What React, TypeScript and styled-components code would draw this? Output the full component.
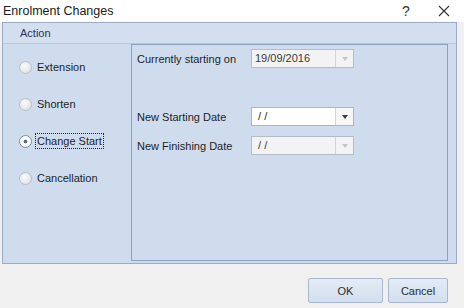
import React from 'react';
import styled, { createGlobalStyle } from 'styled-components';

const GlobalStyle = createGlobalStyle`
  html, body {
    margin: 0;
    padding: 0;
    background: #f0f0f0;
  }
  body {
    font-family: "Liberation Sans", Arial, sans-serif;
    font-size: 11px;
    color: #1e1e1e;
  }
`;

const Dialog = styled.div`
  width: 464px;
  height: 308px;
  display: flex;
  flex-direction: column;
  background: #f0f0f0;
  overflow: hidden;
`;

const TitleBar = styled.div`
  height: 22px;
  background: #ffffff;
  display: flex;
  align-items: center;
  padding-left: 3px;
  font-size: 12.5px;
  color: #202020;
`;

const Title = styled.div`
  flex: 1;
  margin-top: -1px;
`;

const TitleButton = styled.div<{ $w: number }>`
  width: ${(p) => p.$w}px;
  display: flex;
  justify-content: center;
  align-items: center;
  font-size: 14px;
  color: #333;
`;

const Group = styled.div`
  margin-left: 2px;
  width: 453px;
  height: 240px;
  border: 1px solid #9aabc7;
  background: #cfdcee;
  display: flex;
  flex-direction: column;
`;

const GroupHeader = styled.div`
  height: 20px;
  border-bottom: 1px solid #b8c7dd;
  background: #d3dfef;
  display: flex;
  align-items: center;
  padding-left: 17px;
  color: #25365a;
`;

const GroupBody = styled.div`
  flex: 1;
  display: flex;
  padding: 0 8px 2px 0;
`;

const RadioList = styled.div`
  width: 128px;
  display: flex;
  flex-direction: column;
  gap: 17px;
  padding: 13px 0 0 15px;
  box-sizing: border-box;
`;

const RadioRow = styled.div`
  height: 20px;
  display: flex;
  align-items: center;
  gap: 3px;
`;

const RadioDot = styled.span<{ $checked?: boolean }>`
  width: 13px;
  height: 13px;
  border-radius: 50%;
  box-sizing: border-box;
  border: 1px solid ${(p) => (p.$checked ? '#7d8fae' : '#b9bcc2')};
  background: ${(p) =>
    p.$checked
      ? 'radial-gradient(circle, #5a6c8c 0 1.5px, #ffffff 2.2px)'
      : 'radial-gradient(circle at 40% 35%, #fafafa, #dcdde0)'};
  margin-left: 1px;
`;

const RadioLabel = styled.span<{ $focused?: boolean }>`
  padding: 1px 1px;
  border: 1px dotted ${(p) => (p.$focused ? '#222' : 'transparent')};
`;

const Panel = styled.div`
  flex: 1;
  border: 1px solid #8ea0bd;
  background: #cfdcee;
  padding: 4px 0 0 5px;
  display: flex;
  flex-direction: column;
`;

const Field = styled.div<{ $top: number }>`
  display: flex;
  align-items: center;
  margin-top: ${(p) => p.$top}px;
`;

const FieldLabel = styled.div`
  width: 114px;
  white-space: nowrap;
`;

const Combo = styled.div<{ $disabled?: boolean }>`
  width: 103px;
  height: 19px;
  box-sizing: border-box;
  border: 1px solid ${(p) => (p.$disabled ? '#b4bcc8' : '#a9b6c8')};
  background: ${(p) => (p.$disabled ? '#f3f3f3' : '#ffffff')};
  display: flex;
`;

const ComboText = styled.div<{ $disabled?: boolean }>`
  flex: 1;
  padding-left: 3px;
  line-height: 17px;
  color: ${(p) => (p.$disabled ? '#3a3a3a' : '#1e1e1e')};
  white-space: pre;
`;

const ComboButton = styled.div<{ $disabled?: boolean }>`
  width: 17px;
  border-left: 1px solid #d0d4da;
  display: flex;
  align-items: center;
  justify-content: center;
  background: ${(p) => (p.$disabled ? '#f3f3f3' : '#f7f7f7')};
  &::after {
    content: '';
    border-left: 3.5px solid transparent;
    border-right: 3.5px solid transparent;
    border-top: 4px solid ${(p) => (p.$disabled ? '#c4c4c4' : '#3c3c3c')};
  }
`;

const Footer = styled.div`
  flex: 1;
  display: flex;
  justify-content: flex-end;
  align-items: flex-start;
  gap: 5px;
  padding: 14px 16px 0 0;
`;

const Button = styled.div<{ $w: number }>`
  width: ${(p) => p.$w}px;
  height: 25px;
  box-sizing: border-box;
  border: 1px solid #a9b8cf;
  border-radius: 2px;
  background: linear-gradient(#e4ebf5, #d3deee);
  display: flex;
  align-items: center;
  justify-content: center;
  color: #2e2e2e;
`;

const options = ['Extension', 'Shorten', 'Change Start', 'Cancellation'];

function ComboBox({ value, disabled }: { value: string; disabled?: boolean }) {
  return (
    <Combo $disabled={disabled}>
      <ComboText $disabled={disabled}>{value}</ComboText>
      <ComboButton $disabled={disabled} />
    </Combo>
  );
}

export default function App() {
  return (
    <Dialog>
      <GlobalStyle />
      <TitleBar>
        <Title>Enrolment Changes</Title>
        <TitleButton $w={36}>?</TitleButton>
        <TitleButton $w={40}>
          <svg width="12" height="12" viewBox="0 0 12 12">
            <path d="M1 1L11 11M11 1L1 11" stroke="#333" strokeWidth="1.1" />
          </svg>
        </TitleButton>
      </TitleBar>
      <Group>
        <GroupHeader>Action</GroupHeader>
        <GroupBody>
          <RadioList>
            {options.map((o) => (
              <RadioRow key={o}>
                <RadioDot $checked={o === 'Change Start'} />
                <RadioLabel $focused={o === 'Change Start'}>{o}</RadioLabel>
              </RadioRow>
            ))}
          </RadioList>
          <Panel>
            <Field $top={0}>
              <FieldLabel>Currently starting on</FieldLabel>
              <ComboBox value="19/09/2016" disabled />
            </Field>
            <Field $top={39}>
              <FieldLabel>New Starting Date</FieldLabel>
              <ComboBox value=" / /" />
            </Field>
            <Field $top={10}>
              <FieldLabel>New Finishing Date</FieldLabel>
              <ComboBox value=" / /" disabled />
            </Field>
          </Panel>
        </GroupBody>
      </Group>
      <Footer>
        <Button $w={75}>OK</Button>
        <Button $w={60}>Cancel</Button>
      </Footer>
    </Dialog>
  );
}
